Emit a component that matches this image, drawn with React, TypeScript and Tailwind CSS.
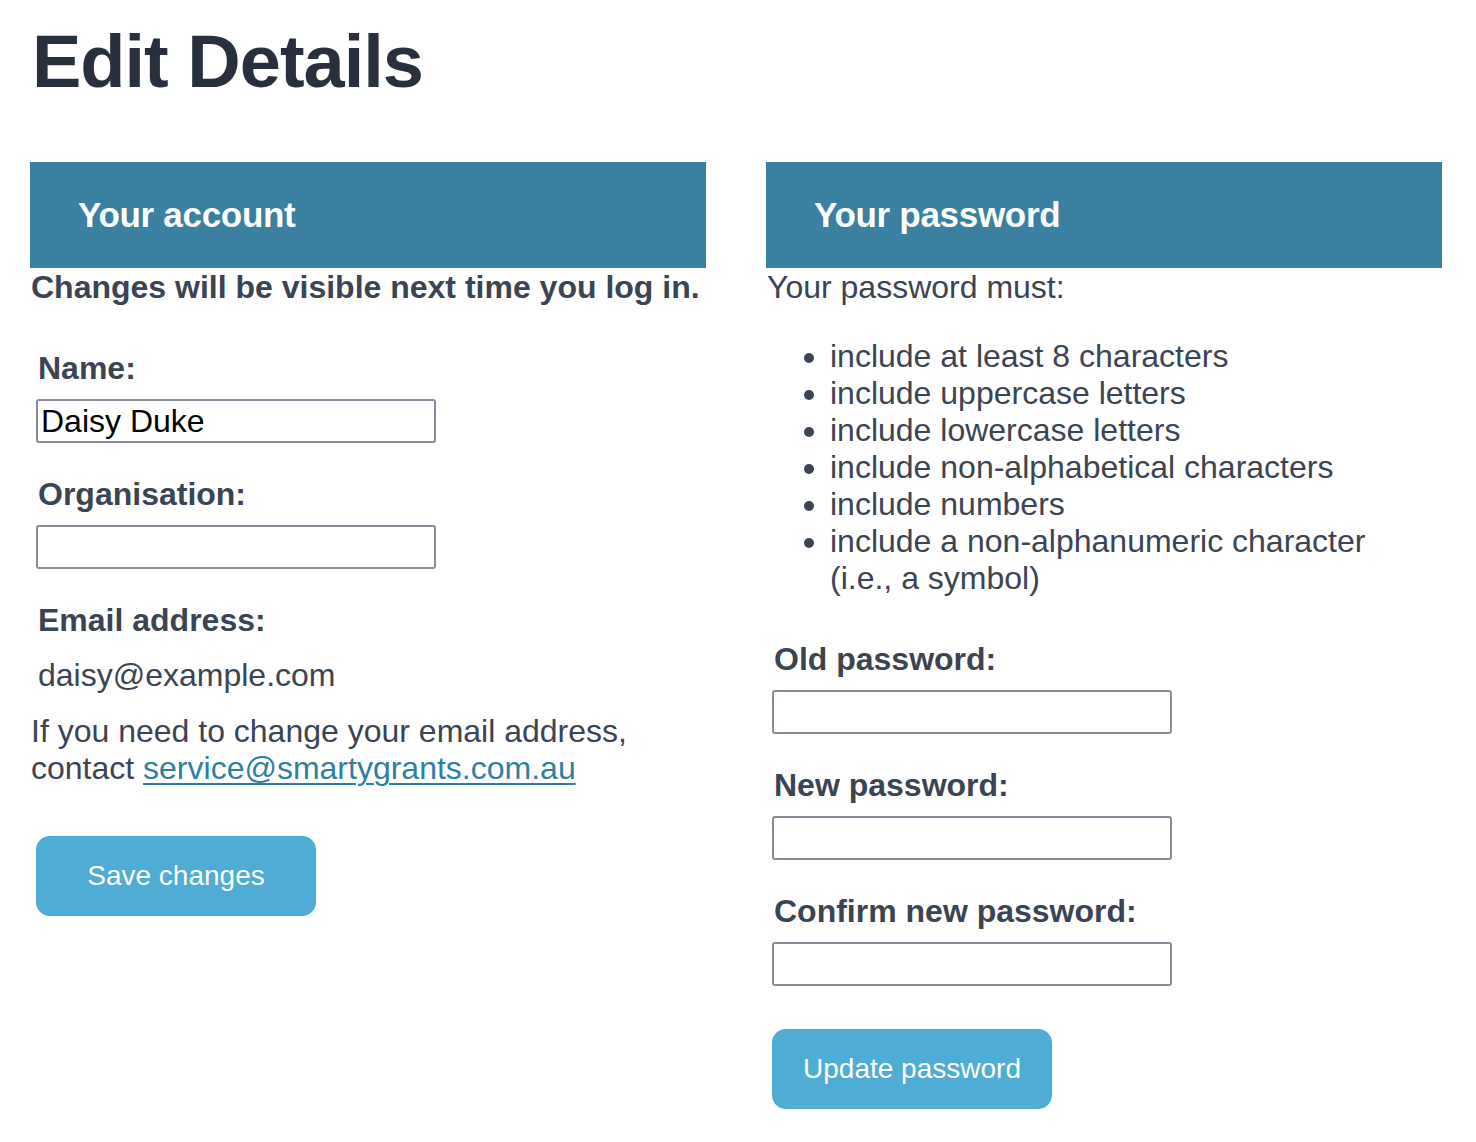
const rules = [
  'include at least 8 characters',
  'include uppercase letters',
  'include lowercase letters',
  'include non-alphabetical characters',
  'include numbers',
  'include a non-alphanumeric character (i.e., a symbol)',
];

function Field({ label, value }: { label: string; value?: string }) {
  return (
    <div className="flex flex-col">
      <label className="pl-[2px] font-bold text-[32px] leading-[36px] text-[#3b4452]">{label}</label>
      <input
        defaultValue={value}
        className="mt-[13px] w-[400px] h-[44px] border-2 border-[#8b8a99] rounded-[3px] px-[3px] text-[32px] text-black outline-none"
      />
    </div>
  );
}

export default function App() {
  return (
    <div className="bg-white min-h-[1142px] pl-[30px] pr-[34px] pt-[20px] font-['Liberation_Sans',Arial,sans-serif] text-[#3b4452]">
      <h1 className="pl-[2px] text-[74px] leading-[84px] font-bold tracking-[-1px] text-[#282f3d]">Edit Details</h1>

      <div className="mt-[58px] grid grid-cols-2 gap-[60px]">
        {/* Account */}
        <section>
          <div className="h-[106px] bg-[#3a80a0] pl-[48px] flex items-center">
            <h2 className="text-white font-bold text-[35px] tracking-[-0.3px]">Your account</h2>
          </div>
          <p className="mt-[1px] pl-[1px] font-bold text-[32px] leading-[37px]">
            Changes will be visible next time you log in.
          </p>

          <div className="mt-[44px] pl-[6px] flex flex-col gap-[33px]">
            <Field label="Name:" value="Daisy Duke" />
            <Field label="Organisation:" />
          </div>

          <div className="mt-[33px] pl-[8px]">
            <div className="font-bold text-[32px] leading-[36px]">Email address:</div>
            <div className="mt-[19px] text-[32px] leading-[36px]">daisy@example.com</div>
          </div>
          <p className="mt-[20px] pl-[1px] text-[32px] leading-[37px]">
            If you need to change your email address,<br />
            contact{' '}
            <a href="#" className="text-[#2f7fa1] underline underline-offset-[4px] decoration-[2px]">
              service@smartygrants.com.au
            </a>
          </p>

          <button className="mt-[49px] ml-[6px] w-[280px] h-[80px] rounded-[14px] bg-[#4eacd5] text-white text-[28px]">
            Save changes
          </button>
        </section>

        {/* Password */}
        <section>
          <div className="h-[106px] bg-[#3a80a0] pl-[48px] flex items-center">
            <h2 className="text-white font-bold text-[35px] tracking-[-0.3px]">Your password</h2>
          </div>
          <p className="mt-[1px] pl-[1px] text-[32px] leading-[37px]">Your password must:</p>

          <ul className="mt-[32px] pl-[64px] pr-[60px] list-disc text-[32px] leading-[37px]">
            {rules.map((r) => (
              <li key={r}>{r}</li>
            ))}
          </ul>

          <div className="mt-[44px] pl-[6px] flex flex-col gap-[33px]">
            <Field label="Old password:" />
            <Field label="New password:" />
            <Field label="Confirm new password:" />
          </div>

          <button className="mt-[43px] ml-[6px] w-[280px] h-[80px] rounded-[14px] bg-[#4eacd5] text-white text-[28px]">
            Update password
          </button>
        </section>
      </div>
    </div>
  );
}
